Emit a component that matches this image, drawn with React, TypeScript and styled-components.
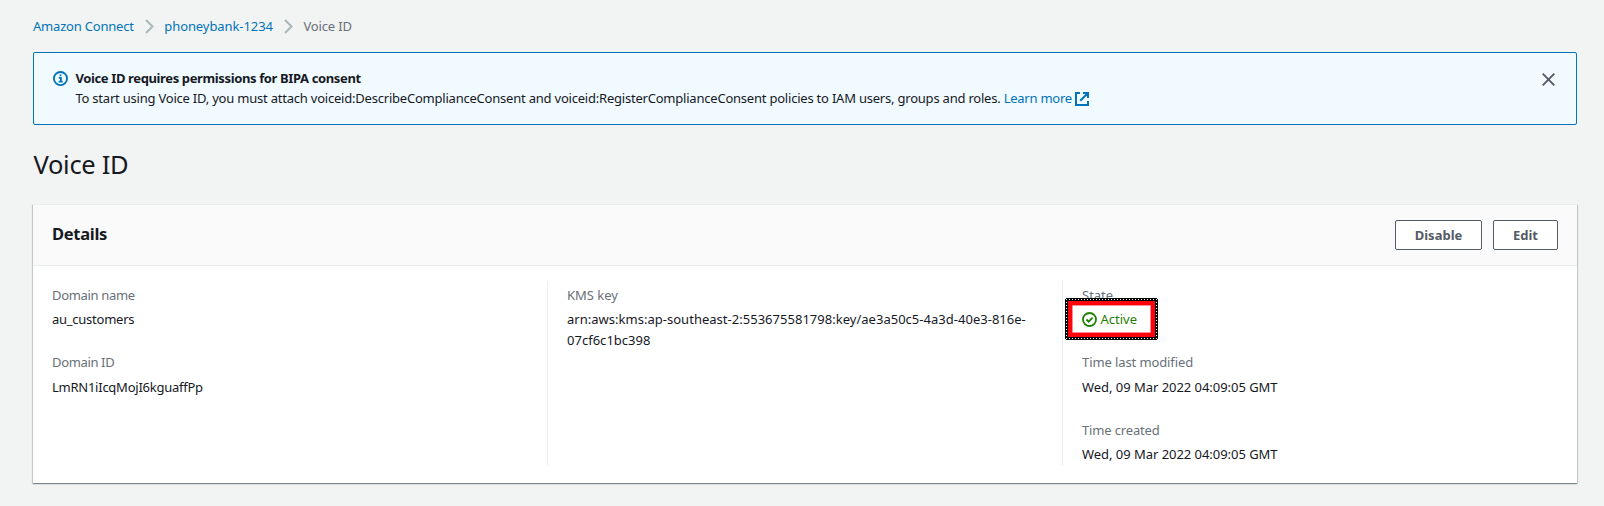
import React from "react";
import styled, { createGlobalStyle } from "styled-components";

const GlobalStyle = createGlobalStyle`
  * { box-sizing: border-box; }
  body {
    margin: 0;
    background: #f2f3f3;
    color: #16191f;
    font-family: "Noto Sans", "Open Sans", sans-serif;
    font-size: 13px;
    line-height: 20px;
  }
`;

const Page = styled.main`
  height: 506px;
  padding: 16px 27px 0 33px;
  overflow: hidden;
`;

const Breadcrumbs = styled.nav`
  display: flex;
  align-items: flex-start;
  height: 21px;
  color: #687078;
`;

const Link = styled.a<{ $tracking?: number }>`
  color: #0073bb;
  text-decoration: none;
  letter-spacing: ${(p) => p.$tracking ?? 0}px;
`;

const Crumb = styled.span`
  white-space: nowrap;
  letter-spacing: -0.15px;
`;

const Chevron = styled.svg`
  flex: none;
  width: 9px;
  height: 15px;
  margin: 3px 10.5px 0 11px;
`;

const Alert = styled.section`
  display: flex;
  height: 73px;
  margin-top: 15px;
  padding: 15px 21px 0 19px;
  border: 1px solid #0073bb;
  border-radius: 2px;
  background: #f1faff;
`;

const InfoIcon = styled.svg`
  flex: none;
  width: 15px;
  height: 15px;
  margin: 3px 7.4px 0 0;
`;

const AlertBody = styled.div`
  flex: 1;
`;

const AlertTitle = styled.div`
  font-weight: 700;
  letter-spacing: -0.37px;
`;

const AlertText = styled.div`
  display: flex;
  align-items: center;
  gap: 3.5px;
  white-space: nowrap;
  letter-spacing: -0.215px;
`;

const ExternalIcon = styled.svg`
  width: 14px;
  height: 14px;
  margin-top: 1px;
`;

const CloseButton = styled.button`
  width: 13px;
  height: 13px;
  margin-top: 5px;
  padding: 0;
  border: 0;
  background: none;
  line-height: 0;
`;

const Title = styled.h1`
  margin: 22px 0 22px 0.5px;
  font-size: 25.5px;
  line-height: 35px;
  font-weight: 400;
  letter-spacing: -0.3px;
`;

const Panel = styled.section`
  height: 279px;
  background: #fff;
  border-top: 1px solid #eaeded;
  box-shadow: 0 1px 1px 0 rgba(0, 28, 36, 0.3), 1px 1px 1px 0 rgba(0, 28, 36, 0.15),
    -1px 1px 1px 0 rgba(0, 28, 36, 0.15);
`;

const PanelHeader = styled.header`
  display: flex;
  align-items: center;
  justify-content: space-between;
  height: 61px;
  padding: 0 19px;
  border-bottom: 1px solid #eaeded;
  background: #fafafa;
`;

const PanelTitle = styled.h2`
  margin: 0 0 2px;
  font-size: 16.5px;
  line-height: 22px;
  letter-spacing: -0.3px;
`;

const Actions = styled.div`
  display: flex;
  gap: 11px;
`;

const Button = styled.button<{ $width: number }>`
  width: ${(p) => p.$width}px;
  height: 30px;
  padding: 0;
  border: 1px solid #545b64;
  border-radius: 2px;
  background: #fff;
  color: #545b64;
  font: 700 13px/28px "Noto Sans", sans-serif;
`;

const Columns = styled.div`
  display: grid;
  grid-template-columns: 514px 515px 1fr;
  grid-template-rows: 184px;
  margin-top: 15px;
`;

const Column = styled.div`
  padding: 3.6px 19px 0;
  & + & {
    border-left: 1px solid #eaeded;
  }
`;

const Field = styled.div`
  height: 67.5px;
`;

const Label = styled.div<{ $tracking?: number }>`
  color: #687078;
  letter-spacing: ${(p) => p.$tracking ?? 0}px;
`;

const Value = styled.div<{ $tracking?: number }>`
  margin-top: 4.5px;
  line-height: 20.9px;
  letter-spacing: ${(p) => p.$tracking ?? 0}px;
`;

const Status = styled.div`
  position: relative;
  display: flex;
  align-items: center;
  gap: 3.5px;
  width: max-content;
  margin-top: 4.5px;
  color: #1d8102;
`;

const StatusIcon = styled.svg`
  width: 15px;
  height: 15px;
  margin-top: 0.8px;
`;

const Highlight = styled.svg`
  position: absolute;
  left: -17px;
  top: -11.1px;
  width: 93px;
  height: 42px;
`;

const Separator = () => (
  <Chevron viewBox="0 0 9 15" fill="none" stroke="#aab7b8" strokeWidth="2">
    <path d="M1 1l6.5 6.5L1 14" />
  </Chevron>
);

const App = () => (
  <>
    <GlobalStyle />
    <Page>
      <Breadcrumbs>
        <Link $tracking={-0.2}>Amazon Connect</Link>
        <Separator />
        <Link $tracking={-0.08}>phoneybank-1234</Link>
        <Separator />
        <Crumb>Voice ID</Crumb>
      </Breadcrumbs>

      <Alert>
        <InfoIcon viewBox="0 0 16 16" fill="none" stroke="#0073bb" strokeWidth="2">
          <circle cx="8" cy="8" r="7" />
          <path d="M8 3.6v2M6.2 7.4H8.4V11.2M6 11.4h4.4" strokeWidth="1.9" />
        </InfoIcon>
        <AlertBody>
          <AlertTitle>Voice ID requires permissions for BIPA consent</AlertTitle>
          <AlertText>
            <span>
              To start using Voice ID, you must attach voiceid:DescribeComplianceConsent and
              voiceid:RegisterComplianceConsent policies to IAM users, groups and roles.{" "}
              <Link $tracking={-0.25}>Learn more</Link>
            </span>
            <ExternalIcon viewBox="0 0 14 14" fill="none" stroke="#0073bb" strokeWidth="2">
              <path d="M5 1H1v12h12V9M8 1h5v5M13 1L5.2 8.8" />
            </ExternalIcon>
          </AlertText>
        </AlertBody>
        <CloseButton aria-label="Close">
          <svg width="13" height="13" viewBox="0 0 13 13" stroke="#545b64" strokeWidth="1.9">
            <path d="M.7.7l11.6 11.6M12.3.7L.7 12.3" />
          </svg>
        </CloseButton>
      </Alert>

      <Title>Voice ID</Title>

      <Panel>
        <PanelHeader>
          <PanelTitle>Details</PanelTitle>
          <Actions>
            <Button $width={87}>Disable</Button>
            <Button $width={65}>Edit</Button>
          </Actions>
        </PanelHeader>
        <Columns>
          <Column>
            <Field>
              <Label $tracking={-0.32}>Domain name</Label>
              <Value $tracking={-0.25}>au_customers</Value>
            </Field>
            <Field>
              <Label $tracking={-0.35}>Domain ID</Label>
              <Value $tracking={-0.25}>LmRN1iIcqMojI6kguaffPp</Value>
            </Field>
          </Column>
          <Column>
            <Field>
              <Label>KMS key</Label>
              <Value $tracking={0.02}>
                arn:aws:kms:ap-southeast-2:553675581798:key/ae3a50c5-4a3d-40e3-816e-
                <br />
                07cf6c1bc398
              </Value>
            </Field>
          </Column>
          <Column>
            <Field>
              <Label>State</Label>
              <Status>
                <Highlight viewBox="0 0 93 42">
                  <path fill="#000" fillRule="evenodd" d="M1 0H92V1H93V41H92V42H1V41H0V1H1ZM3 3V39H90V3Z" />
                  <rect x="5.25" y="5.25" width="82.5" height="31.5" fill="none" stroke="#ff000c" strokeWidth="4.5" />
                  <rect x="7.75" y="7.75" width="77.5" height="26.5" fill="none" stroke="#ff9a9f" strokeWidth="0.5" />
                  <path
                    d="M1 1.5H92M1 40.5H92M1.5 4V40M91.5 4V40"
                    fill="none"
                    stroke="#fff"
                    strokeDasharray="1 2"
                  />
                </Highlight>
                <StatusIcon viewBox="0 0 15 15" fill="none" stroke="#1d8102" strokeWidth="1.8">
                  <circle cx="7.5" cy="7.5" r="6.5" />
                  <path d="M4.4 7.5l2.2 2.2 4-4" />
                </StatusIcon>
                <span>Active</span>
              </Status>
            </Field>
            <Field>
              <Label $tracking={-0.1}>Time last modified</Label>
              <Value $tracking={-0.04}>Wed, 09 Mar 2022 04:09:05 GMT</Value>
            </Field>
            <Field>
              <Label $tracking={-0.15}>Time created</Label>
              <Value $tracking={-0.04}>Wed, 09 Mar 2022 04:09:05 GMT</Value>
            </Field>
          </Column>
        </Columns>
      </Panel>
    </Page>
  </>
);

export default App;
